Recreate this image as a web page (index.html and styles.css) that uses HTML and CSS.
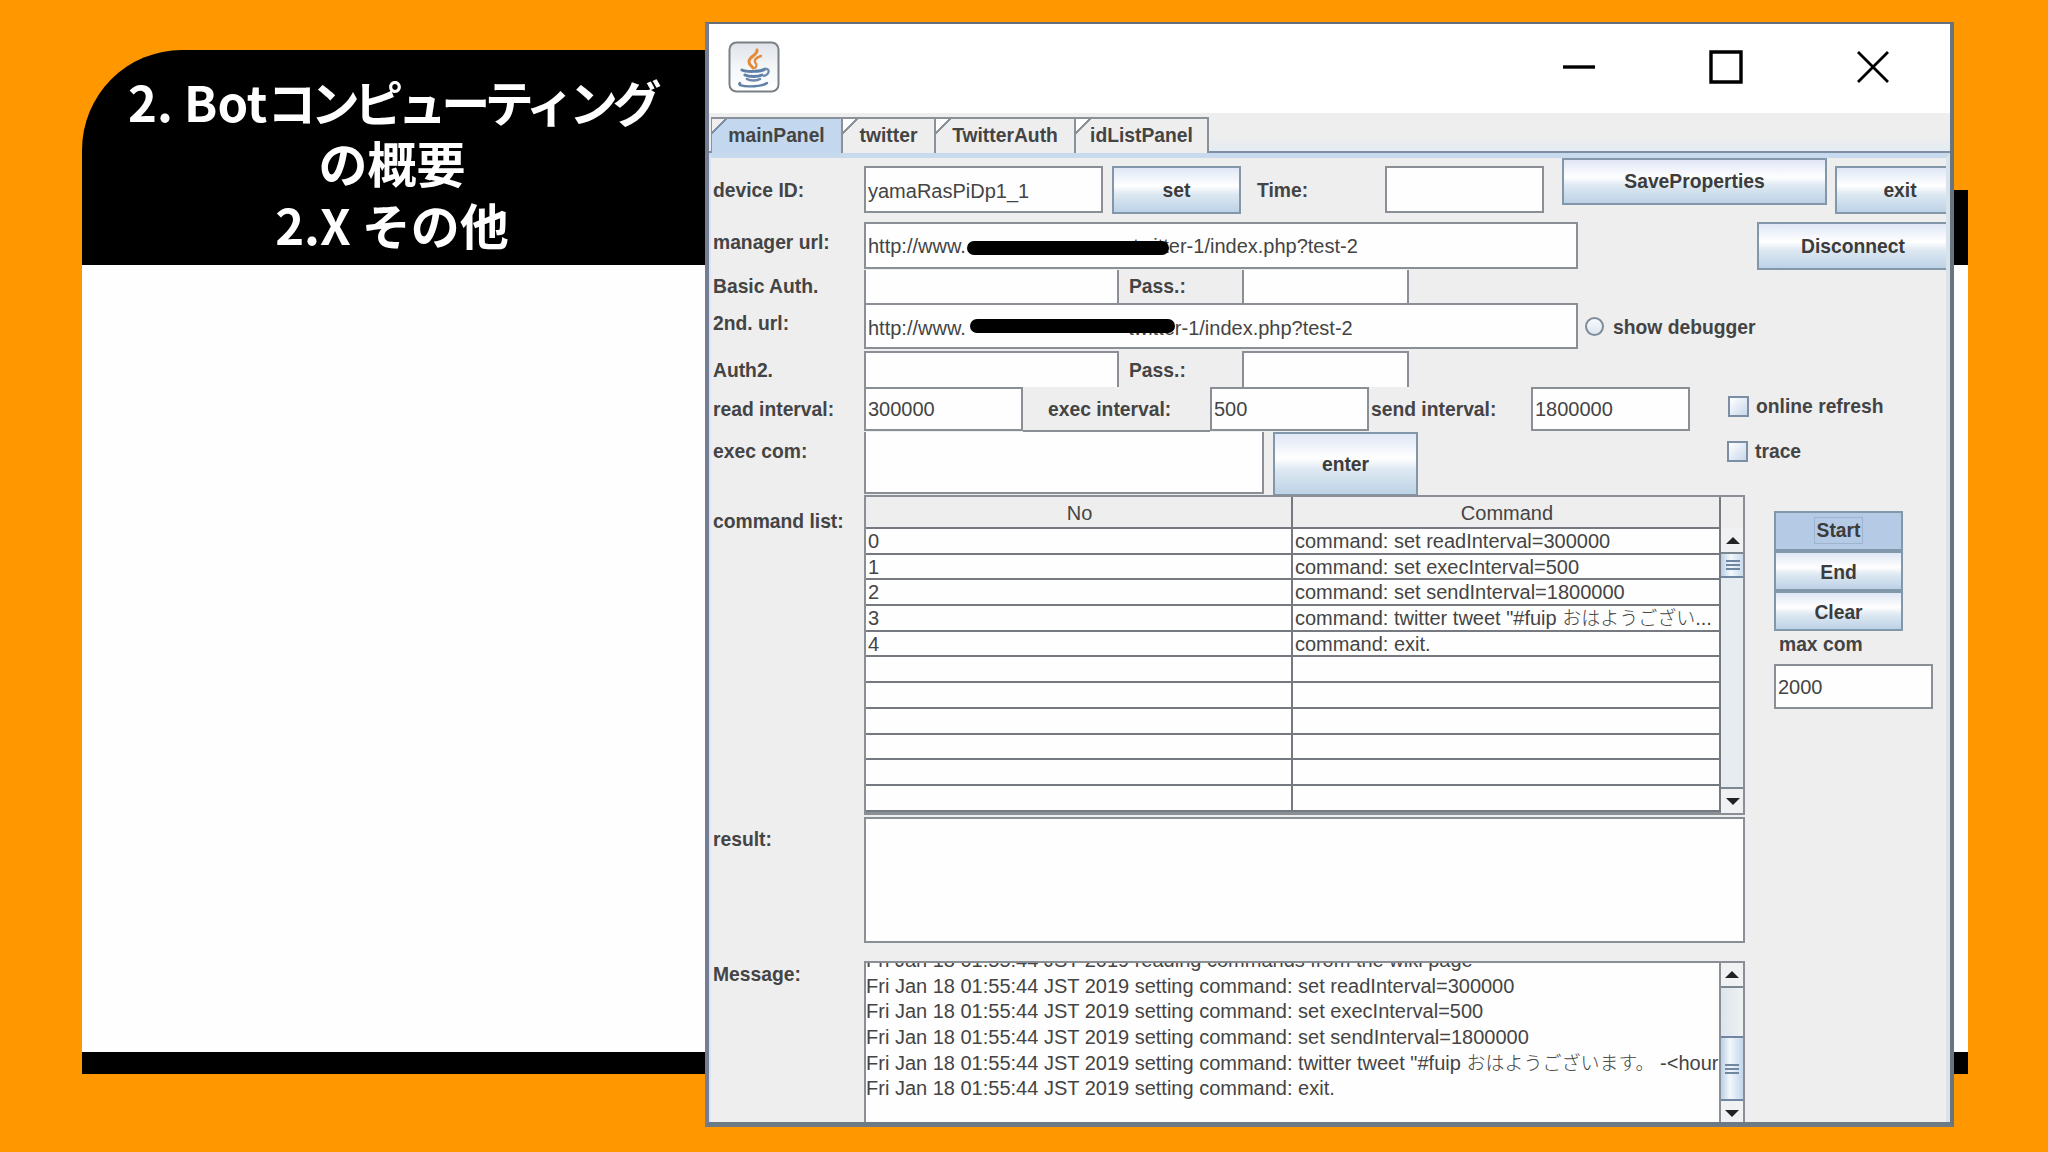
FILE: index.html
```
<!DOCTYPE html>
<html lang="ja">

<head>
  <meta charset="UTF-8">
  <meta name="viewport" content="width=device-width, initial-scale=1.0">
  <title>2. Botコンピューティングの概要</title>
  <link rel="stylesheet" href="styles.css">
</head>

<body>
  <div class="slide">
    <div class="band"></div>
    <h1 class="title">
      <span>2. Bot</span><span class="kana">コンピューティング</span><br>の概要<br><span class="sub">2.X その他</span>
    </h1>
    <div class="footer-band"></div>
  </div>

  <div class="window">
    <div class="titlebar">
      <svg class="java" width="52" height="52" viewBox="0 0 52 52">
        <defs>
          <linearGradient id="tile" x1="0" y1="0" x2="0" y2="1">
            <stop offset="0" stop-color="#dfe3e8" />
            <stop offset="0.5" stop-color="#f4f6f8" />
            <stop offset="1" stop-color="#fff" />
          </linearGradient>
        </defs>
        <rect x="1.5" y="1.5" width="49" height="49" rx="7" fill="url(#tile)" stroke="#7b8086" stroke-width="2" />
        <g fill="none" stroke-linecap="round">
          <path d="M29 9c1 5-9 7-8 12 0 3 3 4 4 6" stroke="#e58a35" stroke-width="3" />
          <path d="M33 15c-3 1-7 3-6 6 1 2 3 3 0 6" stroke="#e08c45" stroke-width="2.4" />
          <path d="M14 29c4 2 19 2 23-1" stroke="#5f7fa8" stroke-width="3" />
          <path d="M37 28c5-1 5 5-1 7" stroke="#6c87ab" stroke-width="2.2" />
          <path d="M17 34c4 2 13 2 17 0" stroke="#5f7fa8" stroke-width="3" />
          <path d="M19 38c3 2 10 2 13 0" stroke="#6c87ab" stroke-width="2.6" />
          <path d="M12 42c-5 4 20 5 27 0" stroke="#5f7fa8" stroke-width="2.4" />
        </g>
      </svg>
      <div class="controls">
        <svg width="34" height="34" viewBox="0 0 34 34"><path d="M1 17h32" /></svg>
        <svg width="34" height="34" viewBox="0 0 34 34"><path d="M2 2h30v30H2z" /></svg>
        <svg width="34" height="34" viewBox="0 0 34 34"><path class="thin" d="M2 2l30 30M32 2L2 32" /></svg>
      </div>
    </div>

    <div class="tabs">
      <div class="tab active w-main"><span>mainPanel</span></div>
      <div class="tab w-tw"><span>twitter</span></div>
      <div class="tab w-auth"><span>TwitterAuth</span></div>
      <div class="tab w-id"><span>idListPanel</span></div>
    </div>

    <div class="panel">
      <div class="row row-device">
        <label>device ID:</label>
        <div class="field f-device">yamaRasPiDp1_1</div>
        <div class="btn b-set">set</div>
        <label class="l-time">Time:</label>
        <div class="field f-time"></div>
        <div class="btn b-save">SaveProperties</div>
        <div class="btn b-exit">exit</div>
      </div>
      <div class="row row-url">
        <label>manager url:</label>
        <div class="field f-url">http://www.<span class="mask"><i>twitt</i></span>er-1/index.php?test-2</div>
        <div class="btn b-disc">Disconnect</div>
      </div>
      <div class="row row-auth">
        <label>Basic Auth.</label>
        <div class="field f-auth"></div>
        <label class="l-pass">Pass.:</label>
        <div class="field f-pass"></div>
      </div>
      <div class="row row-url2">
        <label>2nd. url:</label>
        <div class="field f-url">http://www.<span class="mask low"><i>twitte</i></span>r-1/index.php?test-2</div>
        <div class="radio"></div>
        <label class="l-debug">show debugger</label>
      </div>
      <div class="row row-auth2">
        <label>Auth2.</label>
        <div class="field f-auth"></div>
        <label class="l-pass">Pass.:</label>
        <div class="field f-pass"></div>
      </div>
      <div class="row row-interval">
        <label>read interval:</label>
        <div class="field f-num">300000</div>
        <label class="l-exec">exec interval:</label>
        <div class="field f-num">500</div>
        <label class="l-send">send interval:</label>
        <div class="field f-num">1800000</div>
        <div class="check"></div>
        <label class="l-check">online refresh</label>
      </div>
      <div class="row row-exec">
        <label>exec com:</label>
        <div class="field f-exec"></div>
        <div class="btn b-enter">enter</div>
        <div class="check"></div>
        <label class="l-check">trace</label>
      </div>

      <div class="row row-list">
        <label>command list:</label>
        <div class="list">
          <div class="table">
            <div class="th">No</div><div class="th">Command</div>
            <div>0</div><div>command: set readInterval=300000</div>
            <div>1</div><div>command: set execInterval=500</div>
            <div>2</div><div>command: set sendInterval=1800000</div>
            <div>3</div><div>command: twitter tweet "#fuip <span class="jp">おはようござい</span>...</div>
            <div>4</div><div>command: exit.</div>
            <div></div><div></div>
            <div></div><div></div>
            <div></div><div></div>
            <div></div><div></div>
            <div></div><div></div>
            <div></div><div></div>
          </div>
          <div class="scroll s-table">
            <div class="arrow up"></div>
            <div class="thumb"></div>
            <div class="arrow down"></div>
          </div>
        </div>
        <div class="side">
          <div class="btn pressed"><span>Start</span></div>
          <div class="btn">End</div>
          <div class="btn">Clear</div>
          <label>max com</label>
          <div class="field f-max">2000</div>
        </div>
      </div>

      <div class="row row-result">
        <label>result:</label>
        <div class="field f-result"></div>
      </div>

      <div class="row row-message">
        <label>Message:</label>
        <div class="message">
          <div class="log">
            <p>Fri Jan 18 01:55:44 JST 2019 reading commands from the wiki page</p>
            <p>Fri Jan 18 01:55:44 JST 2019 setting command: set readInterval=300000</p>
            <p>Fri Jan 18 01:55:44 JST 2019 setting command: set execInterval=500</p>
            <p>Fri Jan 18 01:55:44 JST 2019 setting command: set sendInterval=1800000</p>
            <p>Fri Jan 18 01:55:44 JST 2019 setting command: twitter tweet "#fuip <span class="jp">おはようございます。</span> -&lt;hour&gt;</p>
            <p>Fri Jan 18 01:55:44 JST 2019 setting command: exit.</p>
          </div>
          <div class="scroll s-log">
            <div class="arrow up"></div>
            <div class="thumb"></div>
            <div class="arrow down"></div>
          </div>
        </div>
      </div>
    </div>
  </div>
</body>

</html>
```

FILE: styles.css
```
* {
  box-sizing: border-box;
}

body {
  margin: 0;
  width: 2048px;
  height: 1152px;
  overflow: hidden;
  background-color: #ff9800;
  font-family: "Liberation Sans", "Noto Sans CJK JP", sans-serif;
  position: relative;
}

/* slide behind the window */
.slide {
  position: absolute;
  left: 82px;
  top: 50px;
  width: 1886px;
  height: 1024px;
  background: linear-gradient(#ff9800 140px, #000 140px, #000 215px, #fefefe 215px, #fefefe 1002px, #000 1002px);
}

.title {
  margin: 0;
  width: 1000px;
  height: 215px;
  padding: 20px 380px 0 0;
  background-color: #000;
  border-top-left-radius: 100px;
  color: #fff;
  font: bold 49px/61.4px "Noto Sans CJK JP", sans-serif;
  text-align: center;
  white-space: nowrap;
}

.title .kana {
  letter-spacing: -5.5px;
}

/* application window */
.window {
  position: absolute;
  left: 705px;
  top: 22px;
  width: 1249px;
  height: 1105px;
  border: 2px solid #66707c;
  border-left: 4px solid #747d93;
  border-right: 4px solid #68747e;
  border-bottom: 5px solid #6b7a85;
  background-color: #eeeeef;
  overflow: hidden;
}

.titlebar {
  display: flex;
  justify-content: space-between;
  height: 89px;
  padding: 17px 60px 0 19px;
  background-color: #fff;
}

.controls {
  display: flex;
  gap: 113px;
  padding-top: 9px;
}

.controls path {
  fill: none;
  stroke: #000;
  stroke-width: 3.4;
}

.controls .thin {
  stroke-width: 2.8;
}

.tabs {
  display: flex;
  height: 40px;
  padding: 4px 0 0 2px;
  border-bottom: 2px solid #7e8fa3;
  background: linear-gradient(#eee 60%, #e4ecf3);
}

.tab {
  height: 36px;
  border-top: 2px solid #8b9199;
  border-right: 2px solid #8b9199;
  background: linear-gradient(135deg, #fff 9px, #8b9199 9px, #8b9199 11px, #eee 11px);
  color: #444;
  font-size: 19.3px;
  font-weight: bold;
  line-height: 34px;
  text-align: center;
  white-space: nowrap;
}

.tab.active {
  background: linear-gradient(135deg, #eee 9px, #7e8fa3 9px, #7e8fa3 11px, #c3d8ee 11px);
  border-left: 1px solid #8b9199;
}

.w-main { width: 132px; }
.w-tw { width: 93px; }
.w-auth { width: 140px; }
.w-id { width: 133px; }

.panel {
  height: 969px;
  border-top: 5px solid #c8dbee;
  border-left: 2px solid #dde5f2;
  border-right: 4px solid #d9e3ec;
  overflow: hidden;
}

.row {
  display: flex;
  align-items: flex-start;
}

label {
  flex: none;
  color: #444;
  font-size: 19.3px;
  font-weight: bold;
  white-space: nowrap;
}

.row > label:first-child {
  width: 153px;
  padding-left: 2px;
}

.field {
  flex: none;
  border: 2px solid #8a8f95;
  background-color: #fefefe;
  padding-left: 2px;
  color: #444;
  font-size: 20px;
  white-space: nowrap;
}

.btn {
  flex: none;
  border: 2px solid #8397ab;
  background: linear-gradient(#dfe6f5, #fff 40%, #dde8f2 60%, #bdd2e6);
  color: #3c3c3c;
  font-size: 19.3px;
  font-weight: bold;
  text-align: center;
  white-space: nowrap;
}

.row-device { height: 64px; line-height: 50px; padding-top: 8px; }
.row-device .field { height: 47px; line-height: 46px; }
.row-device .btn { height: 48px; line-height: 46px; }
.f-device { width: 239px; }
.b-set { width: 129px; margin-left: 9px; }
.l-time { width: 128px; padding-left: 16px; }
.f-time { width: 159px; margin-left: 16px; }
.row-device .b-save { width: 265px; height: 47px; margin: -8px 8px 0 18px; line-height: 43px; }
.b-exit { width: 130px; }

.row-url { height: 48px; line-height: 42px; }
.row-url .field { height: 47px; line-height: 45px; }
.f-url { width: 714px; }
.b-disc { width: 192px; height: 48px; margin-left: 179px; line-height: 46px; }

/* marker stroke over the host name */
.mask {
  position: relative;
  display: inline-block;
  width: 203px;
  text-align: right;
}

.mask i {
  font-style: normal;
}

.mask::after {
  content: "";
  position: absolute;
  left: 1px;
  right: 0;
  top: 17px;
  height: 14px;
  border-radius: 7px;
  background-color: #000;
}

.mask.low {
  width: 209px;
}

.mask.low::after {
  left: 4px;
  top: 14px;
}

.row-auth { height: 33px; line-height: 34px; }
.row-auth .field { height: 34px; border-top: 0; border-bottom: 0; }
.f-auth { width: 255px; }
.l-pass { width: 123px; padding-left: 10px; }
.f-pass { width: 167px; }

.row-url2 { height: 48px; line-height: 41px; }
.row-url2 .field { height: 46px; line-height: 46px; }

.radio {
  width: 19px;
  height: 19px;
  margin: 14px 9px 0 7px;
  border: 2px solid #7f8c98;
  border-radius: 50%;
  background: linear-gradient(#f7fafc, #dbe6f0);
}

.l-debug { line-height: 49px; }

.row-auth2 { height: 36px; line-height: 40px; }
.row-auth2 .field { height: 36px; border-bottom: 0; }

.row-interval { height: 45px; line-height: 45px; }
.row-interval .field { height: 44px; line-height: 41px; }
.f-num { width: 159px; }
.l-exec { width: 187px; height: 45px; padding-left: 25px; border-bottom: 2px solid #8a8f95; }
.l-send { width: 162px; padding-left: 2px; }

.check {
  flex: none;
  width: 21px;
  height: 21px;
  margin: 9px 7px 0 38px;
  border: 2px solid #7c8ea3;
  background: linear-gradient(135deg, #fff, #c8d8ea);
}

.l-check { line-height: 39px; }

.row-exec { height: 63px; line-height: 40px; }
.f-exec { width: 400px; height: 62px; border-top: 0; }
.b-enter { width: 145px; height: 64px; margin-left: 9px; line-height: 62px; }
.row-exec .check { margin-left: 309px; }

.row-list { height: 322px; line-height: 54px; }

.list {
  display: flex;
  width: 881px;
  height: 320px;
  border: 2px solid #8a8f95;
  overflow: hidden;
}

.table {
  flex: none;
  display: grid;
  grid-template-columns: 427px 428px;
  grid-template-rows: 32px repeat(11, 25.7px);
  width: 855px;
  height: 316px;
  border-bottom: 1px solid #8a8f95;
}

.table div {
  border-right: 2px solid #767a80;
  border-bottom: 2px solid #767a80;
  background-color: #fefefe;
  padding-left: 2px;
  color: #444;
  font-size: 20px;
  line-height: 25px;
  white-space: nowrap;
  overflow: hidden;
}

.table .th {
  background-color: #eee;
  line-height: 33px;
  text-align: center;
}

.jp {
  font-family: "Noto Sans CJK JP", sans-serif;
  font-weight: 300;
  font-size: 19px;
  line-height: 1;
}

.scroll {
  flex: none;
  display: flex;
  flex-direction: column;
  width: 24px;
  background: linear-gradient(90deg, #dde5ec, #eef1f2);
}

.s-table { padding-top: 31px; background: linear-gradient(#eee 31px, #e6ecf0 31px); }

.arrow {
  display: flex;
  justify-content: center;
  align-items: center;
  height: 26px;
  background-color: #f0f1f2;
  border: 0 solid #7c8792;
}

.arrow::after {
  content: "";
  border: 7px solid transparent;
}

.arrow.up { border-bottom-width: 2px; }
.arrow.up::after { border-top: 0; border-bottom: 7px solid #222; }
.arrow.down { margin-top: auto; border-top-width: 2px; }
.arrow.down::after { border-bottom: 0; border-top: 7px solid #222; }

.thumb {
  display: flex;
  justify-content: center;
  align-items: center;
  height: 24px;
  border-bottom: 2px solid #6f87a2;
  background: linear-gradient(90deg, #b9cfe6, #f2f7fc 40%, #c3d6ea);
}

.thumb::after {
  content: "";
  width: 14px;
  height: 10px;
  background: repeating-linear-gradient(#6f87a2 0 2px, transparent 2px 4px);
}

.side {
  display: flex;
  flex-direction: column;
  margin: 16px 0 0 29px;
}

.side .btn {
  width: 129px;
  height: 40px;
  line-height: 39px;
}

.side .pressed {
  background: #b5cbe5;
  line-height: 36px;
}

.pressed span {
  padding: 2px;
  border: 1px solid #9fb5cf;
}

.side label {
  padding-left: 5px;
  line-height: 28px;
  height: 33px;
}

.f-max {
  width: 159px;
  height: 45px;
  line-height: 43px;
}

.row-result { height: 144px; line-height: 46px; }
.f-result { width: 881px; height: 126px; }

.row-message { height: 164px; line-height: 28px; }

.message {
  display: flex;
  width: 881px;
  height: 166px;
  border: 2px solid #8a8f95;
  border-bottom: 0;
}

.log {
  width: 855px;
  border-right: 2px solid #8a8f95;
  background-color: #fefefe;
  overflow: hidden;
}

.log p {
  margin: 0;
  height: 25.7px;
  color: #444;
  font-size: 20px;
  line-height: 25.7px;
  white-space: nowrap;
}

.log p:first-child {
  margin-top: -15px;
}

.s-log { width: 22px; padding-bottom: 1px; }
.s-log .thumb { height: 67px; margin-top: 48px; border-top: 2px solid #6f87a2; }
.s-log .arrow.down { border-top: 0; }
```
